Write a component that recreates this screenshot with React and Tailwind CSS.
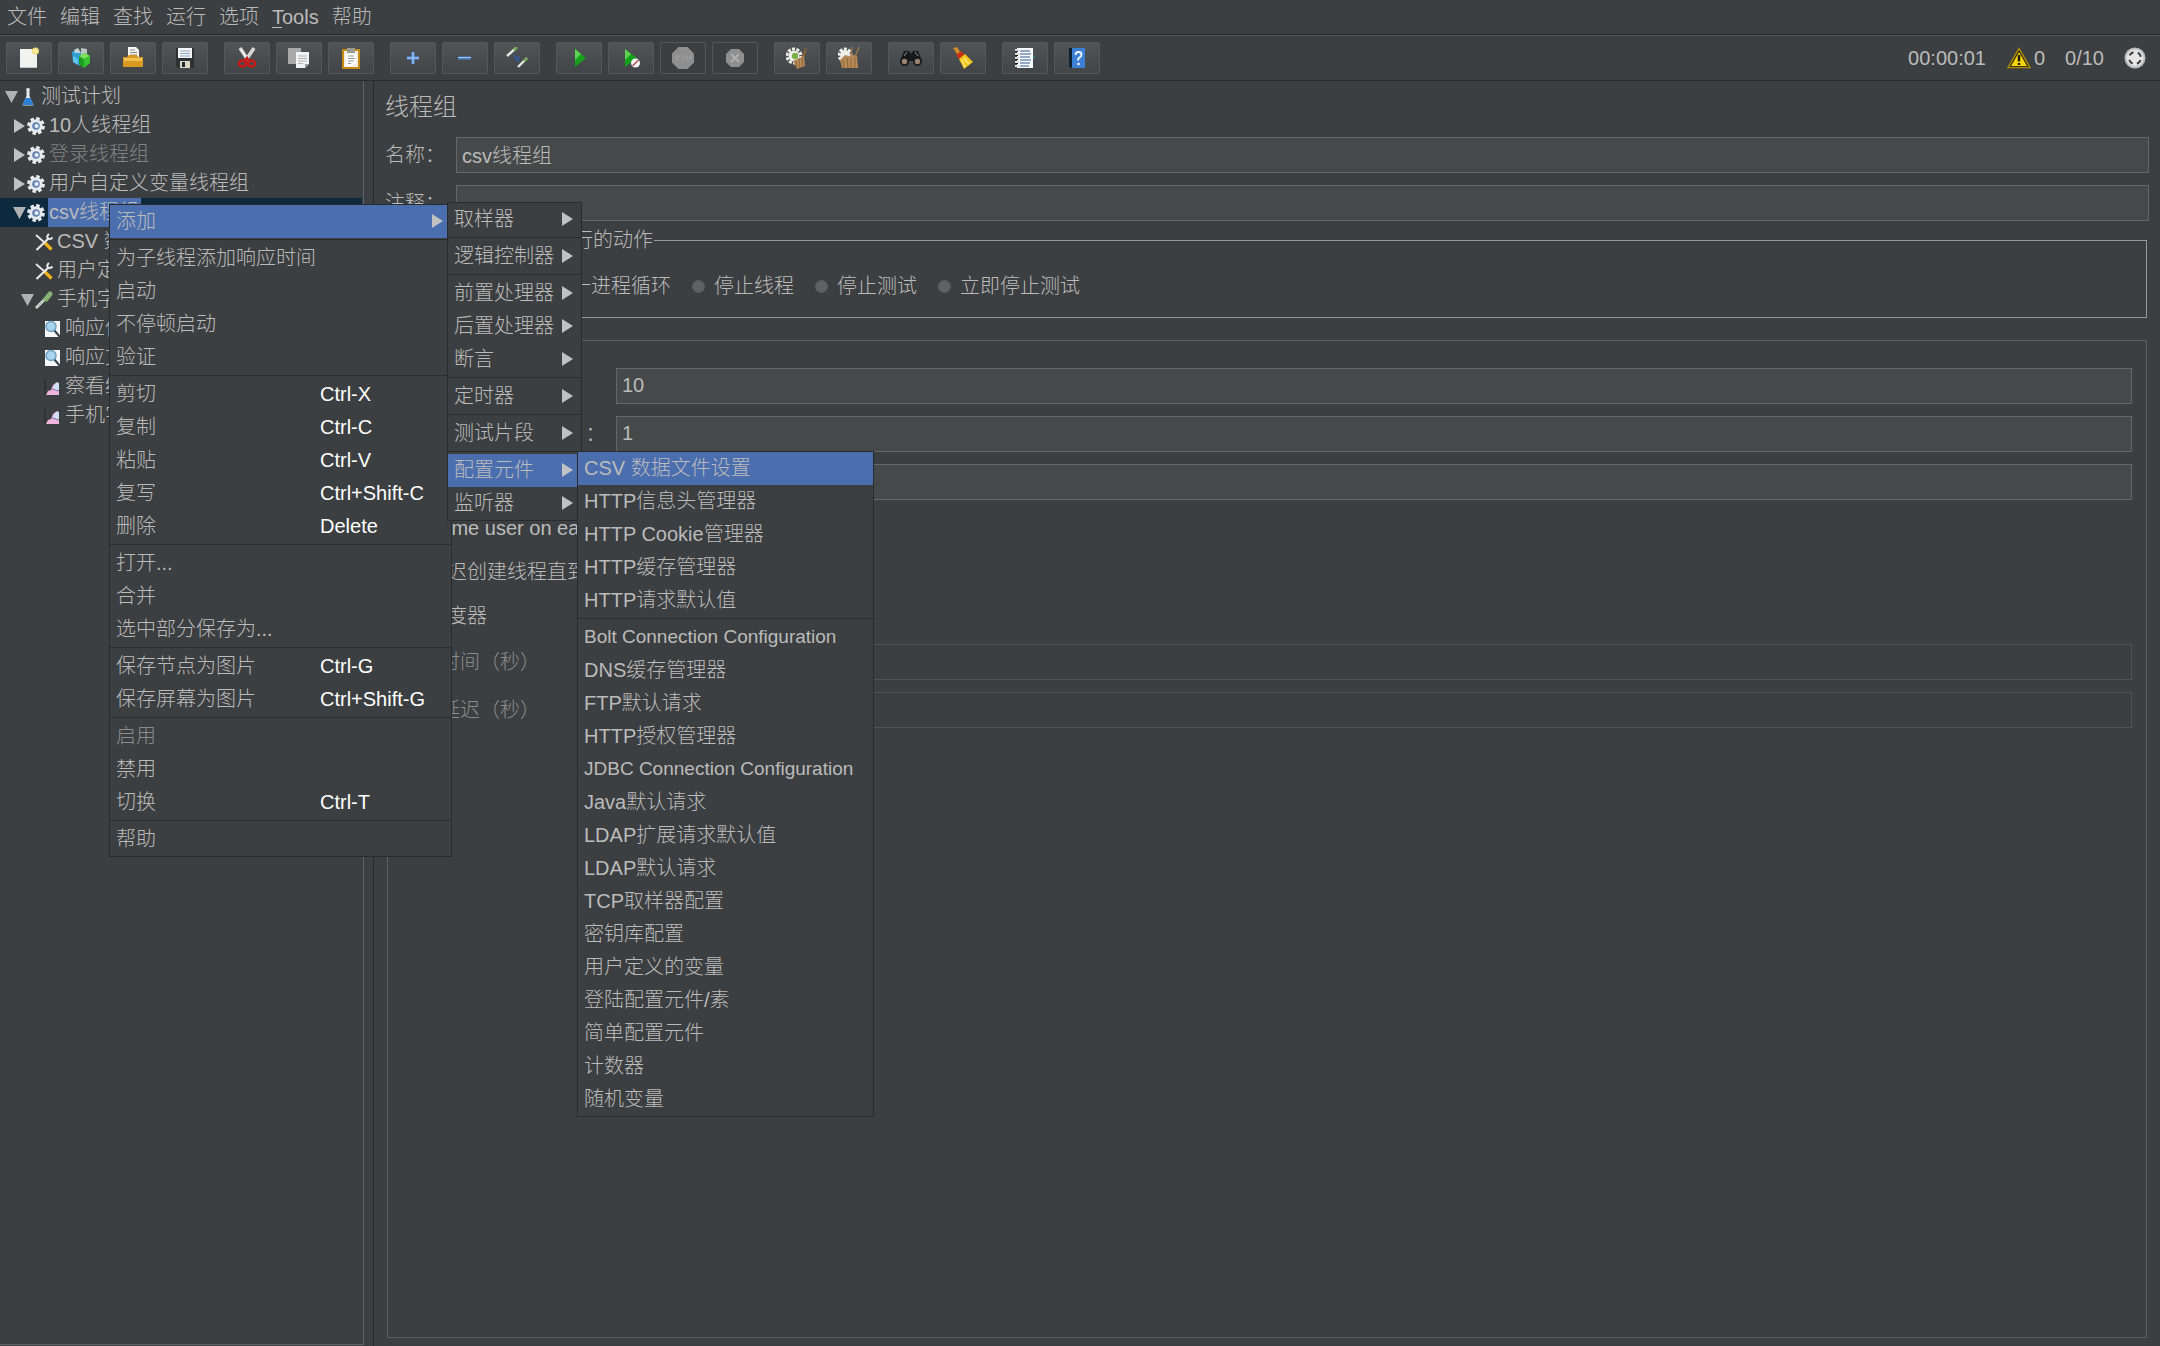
import React from "react";

/* ---------- toolbar icons ---------- */
const Svg = ({ children }) => (
  <svg viewBox="0 0 22 22" className="h-[22px] w-[22px]" aria-hidden="true">
    {children}
  </svg>
);

const icons = {
  new: (
    <Svg>
      <rect x="2" y="2" width="17" height="19" fill="#f2f2f0" />
      <path d="M2 20.5h17" stroke="#c4c4c0" />
      <circle cx="17.500" cy="4" r="3.500" fill="#f3dc7a" />
      <circle cx="17.500" cy="4" r="1.500" fill="#fff6c4" />
    </Svg>
  ),
  templates: (
    <Svg>
      <path d="M2 5l5-3 4 4-1 13-7-4z" fill="#2e9fd6" />
      <path d="M4 3l4-2 3 5H5z" fill="#c3d0d6" />
      <path d="M11 1l6 1v6h-6z" fill="#b6c4c2" />
      <path d="M9 9l6-3 5 3v7l-7 5-4-4z" fill="#1f9d24" />
      <path d="M9 9l6-3 5 3-6 3z" fill="#7ee05a" />
      <path d="M14 12l6-3v7l-6 5z" fill="#35c42f" />
      <path d="M3 9l5 3v6l-5-3z" fill="#5cc4ec" />
    </Svg>
  ),
  open: (
    <Svg>
      <path d="M6 0h8l3 3v10H6z" fill="#f4f4f4" />
      <path d="M8 3h5M8 5.500h7M8 8h7" stroke="#8c8c8c" />
      <path d="M1 10h4l2-2h8l1 2h5v9q0 1-1 1H2q-1 0-1-1z" fill="#d99a22" />
      <path d="M2 11h18v3H2z" fill="#f2c153" />
    </Svg>
  ),
  save: (
    <Svg>
      <path d="M2 1h18v20H4l-2-2z" fill="#2d3134" />
      <rect x="4" y="1" width="14" height="10" fill="#f3f5f8" />
      <path d="M6 4h10M6 6.5h10M6 9h10" stroke="#8fa6c4" />
      <rect x="6" y="14" width="10" height="7" fill="#d9d7c8" />
      <rect x="8" y="15" width="3" height="5" fill="#25282a" />
    </Svg>
  ),
  cut: (
    <Svg>
      <path d="M4 1l8 12M18 1l-8 12" stroke="#d9d9d9" strokeWidth="3.500" />
      <path d="M5 2l7 11" stroke="#fff" strokeWidth="1" />
      <ellipse cx="6.500" cy="16.500" rx="3.500" ry="3" fill="none" stroke="#c91a1a" strokeWidth="2.500" />
      <ellipse cx="15.500" cy="16.500" rx="3.500" ry="3" fill="none" stroke="#c91a1a" strokeWidth="2.500" />
      <path d="M9 14l2-3 2 3" stroke="#c91a1a" strokeWidth="2.500" fill="none" />
    </Svg>
  ),
  copy: (
    <Svg>
      <rect x="0" y="1" width="13" height="16" fill="#a9a9a9" />
      <path d="M8 5h13v12l-4 4H8z" fill="#f1f1f1" />
      <path d="M10 9h9M10 11.500h9M10 14h9M10 16.500h5" stroke="#b4b4b4" />
      <path d="M17 21v-4h4z" fill="#9a9a9a" />
    </Svg>
  ),
  paste: (
    <Svg>
      <rect x="3" y="3" width="16" height="18" fill="#f2eee4" stroke="#c58a12" strokeWidth="2" />
      <path d="M7 1h8v5H7z" fill="#9b9b93" />
      <path d="M6 7h10v9l-3 3H6z" fill="#fff" />
      <path d="M8 9h6M8 11.500h7M8 14h6M8 16.500h3" stroke="#8d9a8d" />
    </Svg>
  ),
  plus: (
    <Svg>
      <path d="M11 5v12M5 11h12" stroke="#5a97e6" strokeWidth="3" />
      <path d="M11 5v12M5 11h12" stroke="#a9cdf8" strokeWidth="1" />
    </Svg>
  ),
  minus: (
    <Svg>
      <path d="M4 11h13" stroke="#4a84c8" strokeWidth="3" />
      <path d="M4 10.500h13" stroke="#9cc4f2" strokeWidth="1" />
    </Svg>
  ),
  toggle: (
    <Svg>
      <path d="M1 9l9-8" stroke="#e4e8e0" strokeWidth="2.400" />
      <path d="M8 3l3-2.700" stroke="#6fae4c" strokeWidth="2.400" />
      <path d="M12 20l9-9" stroke="#e4e8e0" strokeWidth="2.400" />
      <path d="M18 14l3-3" stroke="#6fae4c" strokeWidth="2.400" />
      <path d="M8 8l3 4 3-2M9 12l4 2" stroke="#33599a" strokeWidth="2" fill="none" />
    </Svg>
  ),
  start: (
    <Svg>
      <path d="M7 2l11 9-11 9z" fill="#15a01c" />
      <path d="M7 2l6 5-6 6z" fill="#5fd054" />
    </Svg>
  ),
  startNoPause: (
    <Svg>
      <path d="M5 2l12 9-12 9z" fill="#15a01c" />
      <path d="M5 2l6 5-6 6z" fill="#5fd054" />
      <circle cx="15.500" cy="16" r="4.500" fill="#f4f4f4" />
      <path d="M12.500 19l6-6" stroke="#b0484e" strokeWidth="1.500" />
    </Svg>
  ),
  stop: (
    <Svg>
      <path d="M6.500 0h9L22 6.500v9L15.500 22h-9L0 15.500v-9z" fill="#8f8f8f" />
      <path d="M4 9h3v2H4v2h3M9 9h3M10.500 9v4M13.500 9h2v4h-2zM17.500 13V9h2v2h-2" stroke="#9c9c9c" fill="none" />
    </Svg>
  ),
  shutdown: (
    <Svg>
      <path d="M7 2h8l5 5v8l-5 5H7l-5-5V7z" fill="#8f8f8f" />
      <path d="M7 7l8 8M15 7l-8 8" stroke="#b0b0b0" strokeWidth="2" />
    </Svg>
  ),
  clear: (
    <Svg>
      <circle cx="8" cy="9" r="7" fill="none" stroke="#efefea" strokeWidth="3" strokeDasharray="3 1.400" />
      <circle cx="8" cy="9" r="5.500" fill="#efefea" />
      <circle cx="9" cy="9" r="3.200" fill="#7cae4a" />
      <path d="M20 0l1 1-3 10h-3z" fill="#8a6438" />
      <path d="M7 14l4-2 7-3 1 10-8 3z" fill="#b68a56" />
      <path d="M10 14l1 7M13 12l1 9M16 11l1 9" stroke="#8e6638" />
    </Svg>
  ),
  clearAll: (
    <Svg>
      <circle cx="7" cy="8" r="6" fill="none" stroke="#efefea" strokeWidth="3" strokeDasharray="3 1.400" />
      <circle cx="7" cy="8" r="5" fill="#efefea" />
      <path d="M14 0l-1 9M21 0l-4 10" stroke="#9a7448" strokeWidth="1.500" />
      <path d="M2 13l5-5 4 1 4-1 4 1 1 12H4z" fill="#b68a56" />
      <path d="M5 13l1 8M9 11l1 10M13 11v10M17 10v11" stroke="#8e6638" />
    </Svg>
  ),
  search: (
    <Svg>
      <path d="M4 4h5l2 3 2-3h5l4 10H0z" fill="#17191a" />
      <circle cx="4.500" cy="14.500" r="4.500" fill="#17191a" />
      <circle cx="17.500" cy="14.500" r="4.500" fill="#17191a" />
      <circle cx="4.500" cy="14.500" r="2.700" fill="#9a8272" />
      <circle cx="17.500" cy="14.500" r="2.700" fill="#9a8272" />
      <path d="M7 5L4 9M15 5l3 4" stroke="#8a9298" />
    </Svg>
  ),
  broom: (
    <Svg>
      <path d="M1 1l4-1 5 8-3 2z" fill="#d08a2a" />
      <path d="M4 8l5-4 4 4-5 5z" fill="#c63016" />
      <path d="M7 12l6-5 8 8-9 7z" fill="#f6c51d" />
      <path d="M10 13l3 7M12 11l5 6" stroke="#fdea84" strokeWidth="1.500" />
    </Svg>
  ),
  log: (
    <Svg>
      <rect x="3" y="1" width="16" height="20" fill="#f6fafd" />
      <path d="M6 4h10M6 7h11M6 10h10M6 13h11M6 16h10M6 19h9" stroke="#35588c" />
      <path d="M1 3h4M1 7h4M1 11h4M1 15h4M1 19h4" stroke="#d9dde0" strokeWidth="2" />
      <path d="M1 4.500h3M1 8.500h3M1 12.500h3M1 16.500h3" stroke="#191b1c" />
      <path d="M19 8l2 2-2 2z" fill="#2f8a8a" />
    </Svg>
  ),
  help: (
    <Svg>
      <path d="M3 1h4v20l-4-1z" fill="#10202f" />
      <rect x="6" y="1" width="13" height="20" fill="#3d7fd2" />
      <path d="M9.500 8q0-3 3-3t3 2.500q0 2-2 3t-1 3" stroke="#f2f8ff" strokeWidth="1.800" fill="none" />
      <circle cx="12.500" cy="17" r="1.300" fill="#f2f8ff" />
    </Svg>
  ),
};

const toolGroups = [
  [["new", "新建"], ["templates", "模板"], ["open", "打开"], ["save", "保存"]],
  [["cut", "剪切"], ["copy", "复制"], ["paste", "粘贴"]],
  [["plus", "展开"], ["minus", "收起"], ["toggle", "切换"]],
  [["start", "启动"], ["startNoPause", "不停顿启动"], ["stop", "停止", true], ["shutdown", "关闭", true]],
  [["clear", "清除"], ["clearAll", "清除全部"]],
  [["search", "查找"], ["broom", "重置查找"]],
  [["log", "函数助手"], ["help", "帮助"]],
];

/* ---------- tree icons ---------- */
const TreeSvg = ({ children }) => (
  <svg viewBox="0 0 18 18" className="h-[18px] w-[18px] shrink-0" aria-hidden="true">
    {children}
  </svg>
);

const treeIcons = {
  flask: (
    <TreeSvg>
      <path d="M7 1h4M8 1v7L4 17h10l-4-9V1z" fill="#e3e9ee" stroke="#e3e9ee" />
      <path d="M6.500 10h5l3 7H3.500z" fill="#2a7fd4" />
    </TreeSvg>
  ),
  gear: (
    <TreeSvg>
      <circle cx="9" cy="9" r="7.300" fill="none" stroke="#e6eaee" strokeWidth="3.200" strokeDasharray="3.400 2.330" />
      <circle cx="9" cy="9" r="5" fill="#7f9cc4" stroke="#e6eaee" strokeWidth="3.400" />
      <circle cx="9" cy="9" r="3.800" fill="#6484b4" />
      <circle cx="9.500" cy="9" r="2" fill="#eef3fa" />
    </TreeSvg>
  ),
  tools: (
    <TreeSvg>
      <path d="M1 2l9 8" stroke="#e8e8e8" strokeWidth="1.800" />
      <path d="M9.500 9.500l7 7" stroke="#edb21c" strokeWidth="3.400" />
      <path d="M1.500 17L14 5" stroke="#e8e8e8" strokeWidth="2.200" />
      <path d="M14 1q-3 2.500-1 4.500 2 1.500 4.500-1" stroke="#e8e8e8" strokeWidth="2" fill="none" />
    </TreeSvg>
  ),
  dropper: (
    <TreeSvg>
      <path d="M1 17l9-9" stroke="#dfe6df" strokeWidth="2.600" />
      <path d="M1.500 16.500l7-7" stroke="#8fa58c" strokeWidth="1" />
      <path d="M8 6l5 5" stroke="#3c5a38" strokeWidth="2" />
      <path d="M11 8l4-5" stroke="#87b374" strokeWidth="5" strokeLinecap="round" />
    </TreeSvg>
  ),
  lens: (
    <TreeSvg>
      <rect x="2" y="1" width="15" height="16" fill="#f7f8f9" />
      <path d="M11 10l6 7" stroke="#33404a" strokeWidth="2" />
      <circle cx="8" cy="6.500" r="5" fill="#a9d6ee" stroke="#6f9fc0" strokeWidth="1.500" />
    </TreeSvg>
  ),
  graph: (
    <TreeSvg>
      <path d="M2 1v16" stroke="#232527" />
      <path d="M3 17l2-4 3-1 2-5 4-3 2 1v12z" fill="#f1b4dc" />
      <path d="M10 10l3-5 3 0v7l-4 1z" fill="#cfe0f4" />
      <path d="M9 11l7 2" stroke="#7a6ea8" />
    </TreeSvg>
  ),
};

const Down = () => (
  <svg viewBox="0 0 13 12" className="h-3 w-[13px] shrink-0" aria-hidden="true">
    <path d="M0 0h13L6.500 12z" fill="#afb1b3" />
  </svg>
);
const Right = () => (
  <svg viewBox="0 0 11 14" className="h-[14px] w-[11px] shrink-0" aria-hidden="true">
    <path d="M0 0l11 7-11 7z" fill="#bfc1c3" />
  </svg>
);

const tree = [
  { pad: "pl-1", toggle: "down", icon: "flask", text: "测试计划" },
  { pad: "pl-3", toggle: "right", icon: "gear", text: "10人线程组" },
  { pad: "pl-3", toggle: "right", icon: "gear", text: "登录线程组", dim: true },
  { pad: "pl-3", toggle: "right", icon: "gear", text: "用户自定义变量线程组" },
  { pad: "pl-3", toggle: "down", icon: "gear", text: "csv线程组", selected: true },
  { pad: "pl-5", icon: "tools", text: "CSV 数据文件设置" },
  { pad: "pl-5", icon: "tools", text: "用户定义的变量" },
  { pad: "pl-5", toggle: "down", icon: "dropper", text: "手机字段" },
  { pad: "pl-7", icon: "lens", text: "响应信息" },
  { pad: "pl-7", icon: "lens", text: "响应文本" },
  { pad: "pl-7", icon: "graph", text: "察看结果树" },
  { pad: "pl-7", icon: "graph", text: "手机字段" },
];

const TreeRow = ({ pad, toggle, icon, text, dim, selected }) => (
  <li
    role="treeitem"
    aria-selected={!!selected}
    className={`flex h-[29px] items-center whitespace-nowrap ${pad} ${selected ? "bg-[#0d293e]" : ""} ${dim ? "text-[#808284]" : ""}`}
  >
    <span className="flex w-[15px] shrink-0 justify-center">
      {toggle === "down" && <Down />}
      {toggle === "right" && <Right />}
    </span>
    {treeIcons[icon]}
    <span className={`ml-[3px] flex h-full items-center pr-[2px] pb-[1px] pl-[1px] ${selected ? "bg-[#4b6eaf]" : ""}`}>{text}</span>
  </li>
);

/* ---------- menus ---------- */
const contextMenu = [
  [{ t: "添加", sub: true, on: true }],
  [{ t: "为子线程添加响应时间" }, { t: "启动" }, { t: "不停顿启动" }, { t: "验证" }],
  [
    { t: "剪切", k: "Ctrl-X" },
    { t: "复制", k: "Ctrl-C" },
    { t: "粘贴", k: "Ctrl-V" },
    { t: "复写", k: "Ctrl+Shift-C" },
    { t: "删除", k: "Delete" },
  ],
  [{ t: "打开..." }, { t: "合并" }, { t: "选中部分保存为..." }],
  [{ t: "保存节点为图片", k: "Ctrl-G" }, { t: "保存屏幕为图片", k: "Ctrl+Shift-G" }],
  [{ t: "启用", off: true }, { t: "禁用" }, { t: "切换", k: "Ctrl-T" }],
  [{ t: "帮助" }],
];

const addMenu = [
  [{ t: "取样器", sub: true }],
  [{ t: "逻辑控制器", sub: true }],
  [{ t: "前置处理器", sub: true }, { t: "后置处理器", sub: true }, { t: "断言", sub: true }],
  [{ t: "定时器", sub: true }],
  [{ t: "测试片段", sub: true }],
  [{ t: "配置元件", sub: true, on: true }, { t: "监听器", sub: true }],
];

const configMenu = [
  [
    { t: "CSV 数据文件设置", on: true },
    { t: "HTTP信息头管理器" },
    { t: "HTTP Cookie管理器" },
    { t: "HTTP缓存管理器" },
    { t: "HTTP请求默认值" },
  ],
  [
    { t: "Bolt Connection Configuration", latin: true },
    { t: "DNS缓存管理器" },
    { t: "FTP默认请求" },
    { t: "HTTP授权管理器" },
    { t: "JDBC Connection Configuration", latin: true },
    { t: "Java默认请求" },
    { t: "LDAP扩展请求默认值" },
    { t: "LDAP默认请求" },
    { t: "TCP取样器配置" },
    { t: "密钥库配置" },
    { t: "用户定义的变量" },
    { t: "登陆配置元件/素" },
    { t: "简单配置元件" },
    { t: "计数器" },
    { t: "随机变量" },
  ],
];

const Menu = ({ groups, place, label }) => (
  <div role="menu" aria-label={label} className={`absolute border border-[#292b2d] bg-[#3c3f41] ${place}`}>
    {groups.map((group, g) => (
      <div key={g} role="group" className={g ? "mt-[1px] border-t border-[#2a2c2e] pt-[2px]" : ""}>
        {group.map((item) => (
          <button
            key={item.t}
            type="button"
            role="menuitem"
            disabled={item.off}
            className={`flex h-[33px] w-full items-center whitespace-nowrap pr-[8px] pb-[1px] pl-[6px] text-left ${item.on ? "bg-[#4b6eaf]" : ""} ${item.off ? "text-[#8a8c8e]" : ""} ${item.latin ? "text-[19px]" : ""}`}
          >
            <span className={item.k ? "w-[204px]" : "flex-1"}>{item.t}</span>
            {item.k && <span className="text-white">{item.k}</span>}
            {item.sub && <Right />}
          </button>
        ))}
      </div>
    ))}
  </div>
);

/* ---------- form parts ---------- */
const field =
  "h-9 min-w-0 flex-1 border border-[#646668] bg-[#45494a] px-[5px] pb-[2px] text-[#bbbbbb] outline-none disabled:border-[#505355] disabled:bg-[#3c3f41]";

const Field = ({ id, label, value, wide, disabled }) => (
  <div className="flex items-center">
    <label htmlFor={id} className={`shrink-0 whitespace-nowrap ${wide ? "w-[216px]" : "w-[71px]"} ${disabled ? "text-[#8a8c8e]" : ""}`}>
      {label}
    </label>
    <input id={id} type="text" defaultValue={value} disabled={disabled} className={field} />
  </div>
);

const Check = ({ label, checked }) => (
  <label className="flex h-6 items-center gap-[11px] whitespace-nowrap">
    <input type="checkbox" defaultChecked={checked} className="h-4 w-4 appearance-none border border-[#6b6d6f] bg-[#43494a] checked:bg-[#5a6e8c]" />
    {label}
  </label>
);

const errorActions = ["继续", "启动下一进程循环", "停止线程", "停止测试", "立即停止测试"];

export default function App() {
  return (
    <div className="relative flex min-h-screen flex-col overflow-hidden bg-[#3c3f41] font-['Liberation_Sans','Noto_Sans_CJK_SC',sans-serif] text-[20px] leading-6 font-light text-[#bbbbbb] [text-spacing-trim:space-all]">
      <nav className="flex h-[35px] items-center gap-[13px] border-b border-[#26282a] px-[7px] pb-[1px]">
        {["文件", "编辑", "查找", "运行", "选项"].map((m) => (
          <button key={m} type="button">{m}</button>
        ))}
        <button type="button"><span className="underline decoration-1 underline-offset-3">T</span>ools</button>
        <button type="button">帮助</button>
      </nav>

      <header className="flex h-[46px] items-center justify-between border-t border-b border-t-[#55585a] border-b-[#292b2d] px-[6px] pb-[1px]">
        <div className="flex gap-4">
          {toolGroups.map((group, g) => (
            <div key={g} className="flex gap-[6px]">
              {group.map(([name, label, disabled]) => (
                <button
                  key={name}
                  type="button"
                  aria-label={label}
                  disabled={disabled}
                  className="flex h-8 w-[46px] items-center justify-center rounded-[2px] border border-[#55585a] bg-gradient-to-b from-[#505456] to-[#414547] disabled:from-[#3c3f41] disabled:to-[#3c3f41]"
                >
                  {icons[name]}
                </button>
              ))}
            </div>
          ))}
        </div>
        <div className="flex items-center pr-2">
          <span>00:00:01</span>
          <svg viewBox="0 0 24 22" className="ml-[21px] h-[22px] w-6" aria-hidden="true">
            <path d="M12 1.500L23 20.500H1z" fill="#1d1c10" stroke="#a8880c" strokeWidth="1.500" />
            <path d="M12 5l8 14H4z" fill="#f5d40c" />
            <path d="M12 8v6.500M12 16v2" stroke="#1d1c10" strokeWidth="2.500" />
          </svg>
          <span className="ml-[3px]">0</span>
          <span className="ml-5">0/10</span>
          <svg viewBox="0 0 22 22" className="ml-5 h-[22px] w-[22px]" aria-hidden="true">
            <circle cx="11" cy="11" r="10.500" fill="#bdbdbd" />
            <circle cx="11" cy="11" r="8.500" fill="#e6e6e6" />
            <circle cx="11" cy="11" r="6" fill="none" stroke="#3a3c3e" strokeWidth="2" strokeDasharray="5 4.420" strokeDashoffset="-2.200" />
          </svg>
        </div>
      </header>

      <div className="flex flex-1">
        <aside className="flex w-[364px] shrink-0 flex-col pb-[1px]">
          <ul role="tree" aria-label="测试计划" className="flex-1 overflow-hidden border border-l-0 border-[#606365] border-t-transparent pr-[1px]">
            {tree.map((row, i) => (
              <TreeRow key={i} {...row} />
            ))}
          </ul>
        </aside>
        <div className="w-[10px] shrink-0 border-r border-[#27292b]" />

        <main className="flex min-w-0 flex-1 flex-col pt-2 pr-[11px] pb-2 pl-[11px]">
          <h1 className="h-9 text-[24px] leading-9">线程组</h1>
          <div className="mt-3 flex flex-col gap-3">
            <Field id="name" label="名称：" value="csv线程组" />
            <Field id="comment" label="注释：" value="" />
          </div>

          <fieldset className="mx-[2px] mt-[7px] border border-[#96989a] pb-[11px] pl-[18px]">
            <legend className="-ml-[14px] px-[1px]">在取样器错误后要执行的动作</legend>
            <div className="flex items-center gap-[21px] pt-[22px] pb-2 whitespace-nowrap">
              {errorActions.map((a, i) => (
                <label key={a} className="flex items-center gap-[9px]">
                  <input
                    type="radio"
                    name="onError"
                    defaultChecked={i === 0}
                    className="h-[13px] w-[13px] appearance-none rounded-full border border-[#5c5f61] bg-[#5f6264] checked:bg-[#a0a2a4]"
                  />
                  {a}
                </label>
              ))}
            </div>
          </fieldset>

          <fieldset className="mx-[2px] mt-[10px] flex-1 border border-[#5c5f61] pr-[14px] pl-3">
            <legend className="-ml-2 px-[1px]">线程属性</legend>
            <div className="flex flex-col gap-3 pt-4">
              <Field wide id="threads" label="线程数：" value="10" />
              <Field wide id="ramp" label="Ramp-Up时间（秒）：" value="1" />
              <Field wide id="loops" label="循环次数" value="" />
            </div>
            <div className="flex flex-col gap-5 py-4">
              <Check label="Same user on each iteration" checked />
              <Check label="延迟创建线程直到需要" />
              <Check label="调度器" />
            </div>
            <div className="flex flex-col gap-3">
              <Field wide disabled id="duration" label="持续时间（秒）" value="" />
              <Field wide disabled id="delay" label="启动延迟（秒）" value="" />
            </div>
          </fieldset>
        </main>
      </div>

      <Menu label="线程组" groups={contextMenu} place="top-[204px] left-[109px] w-[343px]" />
      <Menu label="添加" groups={addMenu} place="top-[202px] left-[447px] w-[135px]" />
      <Menu label="配置元件" groups={configMenu} place="top-[451px] left-[577px] w-[297px]" />
    </div>
  );
}
